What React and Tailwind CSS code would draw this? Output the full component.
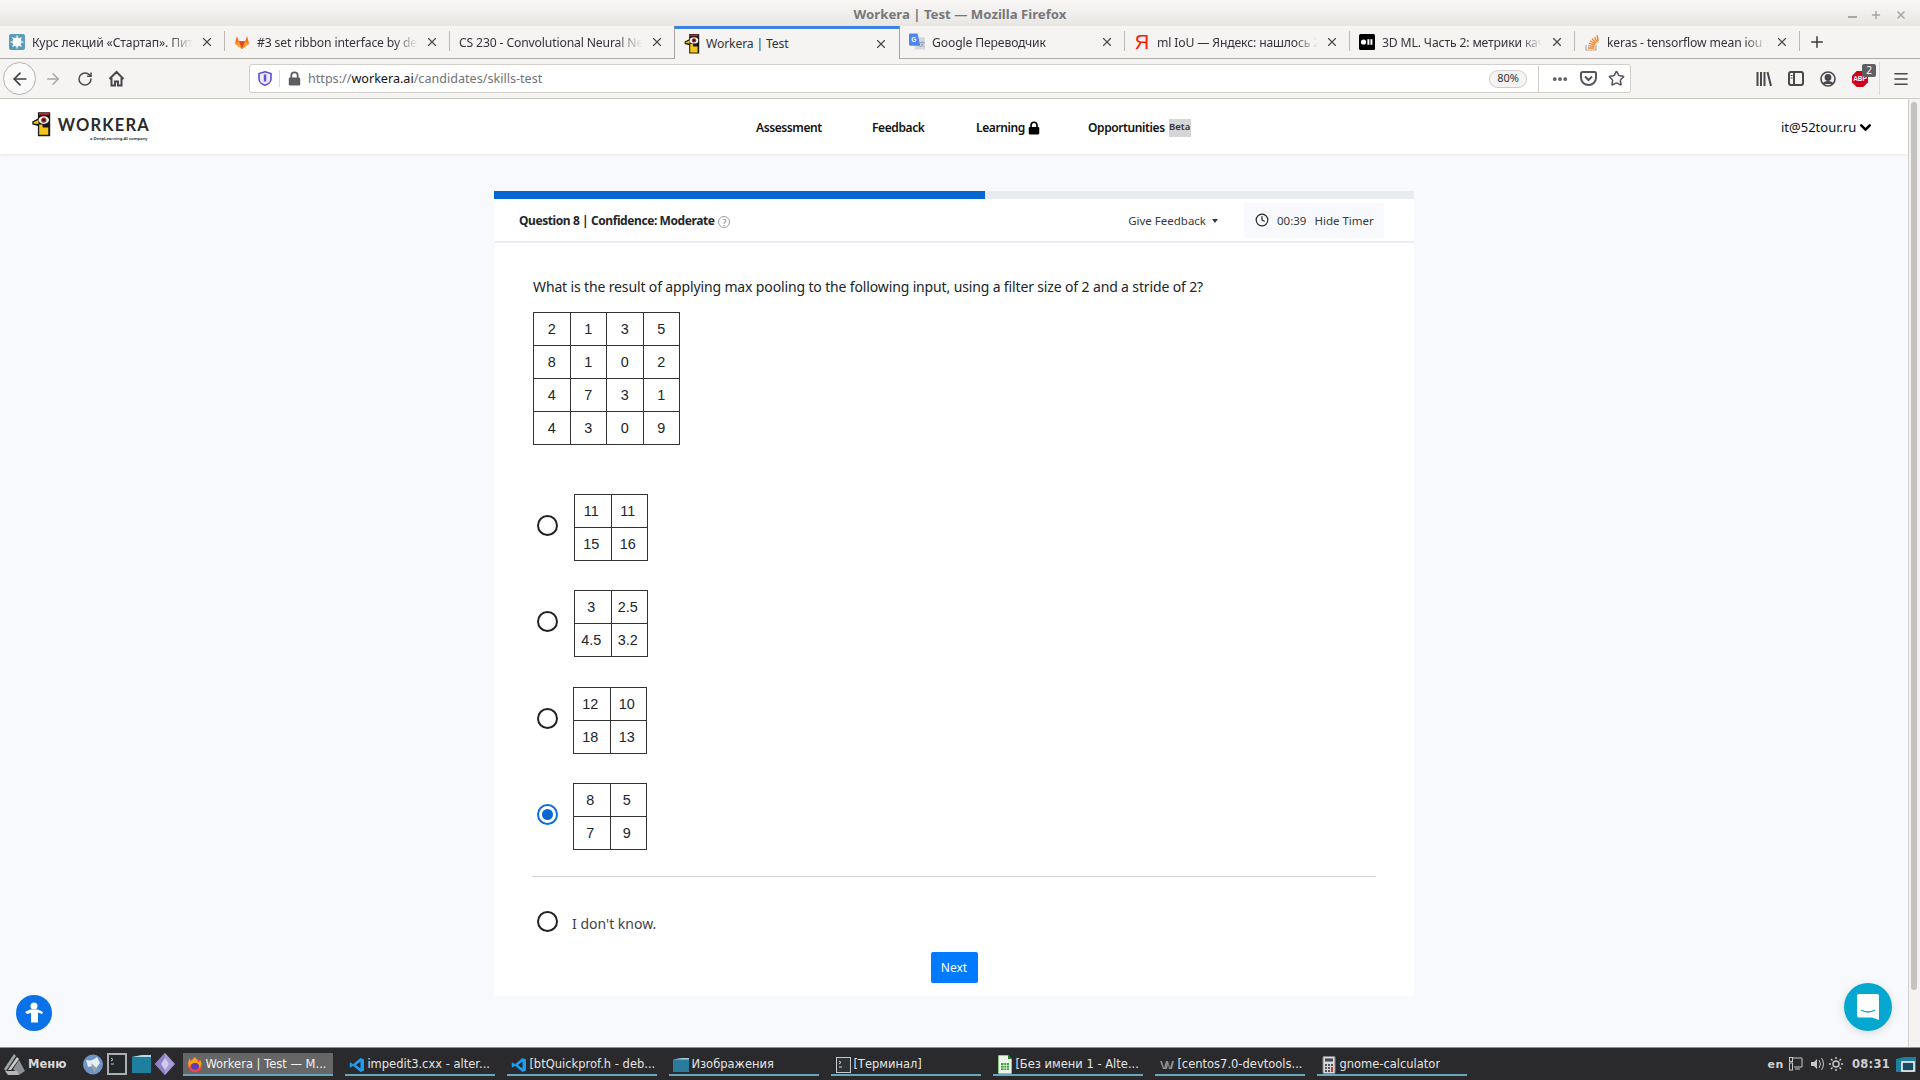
import React from 'react';
import { ArrowLeft, ArrowRight, RotateCw, Star, X, Plus, Menu, ChevronDown, Clock, Ellipsis } from 'lucide-react';

function Padlock({ className, color }) {
  return (
    <svg className={className} viewBox="0 0 13 15">
      <path d="M3.300 7V4.500a3.200 3.200 0 0 1 6.400 0V7" fill="none" stroke={color} strokeWidth="1.800" />
      <rect x="0.800" y="6.500" width="11.400" height="8" rx="1.200" fill={color} />
    </svg>
  );
}

function Bird({ className }) {
  return (
    <svg className={className} viewBox="0 0 19 25">
      <path d="M6 0h12.500v24.500H6V14L0.300 12.500V9.500L6 6.500z" fill="#1a1a1a" />
      <rect x="7" y="0.700" width="10.500" height="2" fill="#c8202c" />
      <path d="M7.300 12.500h3.200l.5 3h5.500v7.500H7.300z" fill="#f5c518" />
      <path d="M1.600 10.200 6.500 8v4l-4.900-.6z" fill="#f5c518" />
      <ellipse cx="12" cy="8" rx="5.300" ry="4" fill="#f4f3ea" />
      <circle cx="12" cy="8" r="2.700" fill="#a92a32" />
      <circle cx="12" cy="8" r="1.300" fill="#111" />
    </svg>
  );
}

function Favicon({ kind }) {
  if (kind === 'bird') return <Bird className="w-[16px] h-[20px]" />;
  if (kind === 'kurs') return (
    <svg width="16" height="16" viewBox="0 0 16 16"><rect width="16" height="16" rx="2" fill="#5b9bbd" /><circle cx="8" cy="8" r="4.500" fill="#fff" /><path d="M8 1.500v13M1.500 8h13M3.500 3.500l9 9M12.500 3.500l-9 9" stroke="#fff" strokeWidth="1.200" /></svg>
  );
  if (kind === 'gitlab') return (
    <svg width="17" height="16" viewBox="0 0 17 16"><path d="M8.500 15.500 1 9.800 3 1.500l2.200 5.600h6.600L14 1.500l2 8.300z" fill="#fc6d26" /><path d="M8.500 15.500 5.200 7.100h6.600z" fill="#e24329" /><path d="M8.500 15.500 1 9.800l4.200-2.700z" fill="#fca326" /><path d="M8.500 15.500 16 9.800l-4.200-2.700z" fill="#fca326" /></svg>
  );
  if (kind === 'translate') return (
    <svg width="17" height="18" viewBox="0 0 17 18"><rect x="6" y="4" width="11" height="13" fill="#d5d7da" /><path d="M1.500 0H9l3 13H1.500A1.500 1.500 0 0 1 0 11.500v-10A1.500 1.500 0 0 1 1.500 0z" fill="#4a86ee" /><text x="2.500" y="9" fontSize="7" fontWeight="700" fill="#fff" fontFamily="'Liberation Sans',sans-serif">G</text><text x="11" y="13" fontSize="6" fill="#7d8aa0" fontFamily="'Noto Sans CJK SC',sans-serif">文</text></svg>
  );
  if (kind === 'yandex') return <span className="w-[16px] text-center text-[20px] leading-none text-[#f5200a] font-['Liberation_Sans',sans-serif]">Я</span>;
  if (kind === 'hub') return (
    <svg width="16" height="16" viewBox="0 0 16 16"><rect width="16" height="16" rx="1.500" fill="#000" /><circle cx="4.500" cy="8" r="2.600" fill="#fff" /><rect x="8.400" y="5.200" width="2" height="5.600" fill="#fff" /><rect x="11.400" y="5.200" width="2" height="5.600" fill="#fff" /></svg>
  );
  if (kind === 'so') return (
    <svg width="16" height="17" viewBox="0 0 16 17" fill="none"><path d="M2 11v5h10v-5" stroke="#b0aca6" strokeWidth="1.200" /><path d="M4 14h6.500M4.200 11.600l6.300.7M4.800 9.100l6 1.700M6 6.800l5.400 3M8 4.800l4.300 4.300M10.500 3l2.800 5.200M13 1.200l1.200 5.800" stroke="#f48024" strokeWidth="1.300" /></svg>
  );
  return null;
}

const tabs = [
  { fav: 'kurs', t: 'Курс лекций «Стартап». Пит' },
  { fav: 'gitlab', t: '#3 set ribbon interface by def' },
  { fav: null, t: 'CS 230 - Convolutional Neural Ne' },
  { fav: 'bird', t: 'Workera | Test', active: true },
  { fav: 'translate', t: 'Google Переводчик' },
  { fav: 'yandex', t: 'ml IoU — Яндекс: нашлось 2' },
  { fav: 'hub', t: '3D ML. Часть 2: метрики кач' },
  { fav: 'so', t: 'keras - tensorflow mean iou f' },
];

function Tab({ fav, t, active, hideSep }) {
  return (
    <div className={active
      ? "relative w-[226px] h-[33px] -ml-px flex items-center pl-[9px] pr-[11px] bg-[#f5f4f2] border-x border-[#a9a6a2] border-t-[3px] border-t-[#3d83dc] z-10"
      : "relative w-[225px] h-[33px] flex items-center pl-[9px] pr-[11px] border-b border-[#aeaba7]"}>
      {fav && <span className={active ? "w-[16px] mr-[6px] flex items-center justify-center shrink-0" : "w-[16px] mr-[7px] flex items-center justify-center shrink-0"}><Favicon kind={fav} /></span>}
      <span className={active
        ? "flex-1 min-w-0 overflow-hidden whitespace-nowrap text-[12.2px] tracking-[-0.15px] text-[#33333a]"
        : "pt-[2px] flex-1 min-w-0 overflow-hidden whitespace-nowrap text-[12.2px] tracking-[-0.15px] text-[#33333a] [mask-image:linear-gradient(to_right,black_84%,transparent_98%)]"}>{t}</span>
      <X className="w-[14px] h-[14px] text-[#4a4a4f] shrink-0 ml-[4px]" strokeWidth={2} />
      {!active && !hideSep && <span className="absolute right-0 top-[5px] h-[20px] w-px bg-[#bdbab6]" />}
    </div>
  );
}

function Grid({ rows, tight }) {
  return (
    <table className="border-collapse font-['Liberation_Sans',sans-serif] text-[#212529] text-[14.4px]">
      <tbody>
        {rows.map((r, i) => (
          <tr key={i}>
            {r.map((c, j) => (
              <td key={j} className={tight
                ? "border border-[#333] text-center p-0 pt-[1px] pr-[3px] w-[36.5px] h-[33px]"
                : "border border-[#333] text-center p-0 pt-[1px] w-[36.5px] h-[33px]"}>{c}</td>
            ))}
          </tr>
        ))}
      </tbody>
    </table>
  );
}

function Radio({ on }) {
  return on ? (
    <span className="block w-[21px] h-[21px] rounded-full border-2 border-[#0a6fe0] flex items-center justify-center shrink-0">
      <span className="block w-[11px] h-[11px] rounded-full bg-[#0a66d1]" />
    </span>
  ) : (
    <span className="block w-[21px] h-[21px] rounded-full border-2 border-[#222] shrink-0" />
  );
}

function Option({ on, rows, className, gap }) {
  return (
    <div className={`flex items-center pl-[5px] ${className}`}>
      <div className="-mt-[5px]"><Radio on={on} /></div>
      <div className={gap}><Grid rows={rows} tight /></div>
    </div>
  );
}

function Task({ icon, t, active }) {
  return (
    <div className={active
      ? "w-[150px] h-[23px] mr-[12px] flex items-center pl-[4px] pt-[3px] bg-[#666666] border-b-2 border-[#6aa5bb] text-[#f0f0f0]"
      : "w-[150px] h-[23px] mr-[12px] flex items-center pl-[4px] pt-[3px] border-b-2 border-[#6aa5bb] text-[#e4e4e4]"}>
      <span className="w-[16px] h-[16px] mr-[2px] flex items-center justify-center shrink-0">{icon}</span>
      <span className="whitespace-nowrap overflow-hidden text-[11.5px] font-['DejaVu_Sans',sans-serif]">{t}</span>
    </div>
  );
}

const VS = <svg width="16" height="16" viewBox="0 0 16 16"><path d="M11.500 1 15 2.500v11L11.500 15 4 8.800 1.800 10.500.8 10V6l1-.5L4 7.200z" fill="#1f9cf0" /><path d="M11.500 4.500 7 8l4.500 3.500z" fill="#2a2a2c" /></svg>;
const Term = <svg width="15" height="16" viewBox="0 0 15 16"><rect x=".5" y=".5" width="14" height="15" fill="#2e3436" stroke="#c8c8c8" /><path d="M3 4l2 1.500L3 7M3 10h3" stroke="#ddd" fill="none" /></svg>;
const Folder = <svg width="16" height="15" viewBox="0 0 16 15"><path d="M0 2.500 9 1h7v14H0z" fill="#2a7d9a" /><path d="M0 2.500 9 1h7v1.500H0z" fill="#9fd0e0" /></svg>;
const Fox = <svg width="16" height="17" viewBox="0 0 16 17"><circle cx="8" cy="9.500" r="7" fill="#e8474c" /><circle cx="8" cy="9.500" r="4" fill="#5b3fb0" /><path d="M3 2c-2 3-2.500 7 0 10 0-3 2-5 5-5 3 0 5 2 4 5 3-2 3-6 1-8 0 1-1 2-2 2 0-2-2-4-4-5 0 2-2 3-4 4z" fill="#f7a21b" /></svg>;
const Calc = <svg width="16" height="18" viewBox="0 0 16 18"><rect x="2" y=".5" width="12" height="17" rx="1" fill="#d8d8d8" stroke="#888" /><rect x="4" y="2.500" width="8" height="3" fill="#445" /><path d="M4 8h2v2H4zM7 8h2v2H7zM10 8h2v2h-2zM4 11h2v2H4zM7 11h2v2H7zM4 14h2v2H4zM7 14h2v2H7z" fill="#555" /><path d="M10 11h2v5h-2z" fill="#c33" /></svg>;
const Sheet = <svg width="14" height="19" viewBox="0 0 14 19"><path d="M0 0h10l4 4v15H0z" fill="#eef5e8" stroke="#2a9a2a" /><path d="M10 0l4 4h-4z" fill="#1b7d1b" /><path d="M3 8h8v7H3z" fill="#3ba63b" /><path d="M3 10.500h8M3 13h8M6 8v7M8.500 8v7" stroke="#fff" strokeWidth=".6" /></svg>;
const Vmw = <svg width="14" height="10" viewBox="0 0 14 10"><path d="M0 1h2l2 7 2-7h2l2 7 2-7h2l-2 8h-3L8 4 7 9H3z" fill="#8c8c8c" /></svg>;

export default function App() {
  return (
    <div className="w-[1920px] h-[1080px] overflow-hidden flex flex-col relative font-['Noto_Sans',sans-serif] bg-[#f8f9fd]">
      {/* Title bar */}
      <div className="h-[26px] shrink-0 relative flex items-center justify-center pt-[3px] bg-gradient-to-b from-[#f9f8f7] to-[#e7e6e3]">
        <span className="text-[13.2px] font-bold text-[#77777a]">Workera | Test — Mozilla Firefox</span>
        <div className="absolute right-[13px] top-[9px] flex items-center gap-[13px] text-[#a5a5a5]">
          <span className="w-[9px] h-[2px] bg-[#a9a9a9] mt-[3px]" />
          <Plus className="w-[12px] h-[12px]" strokeWidth={3} />
          <X className="w-[12px] h-[12px]" strokeWidth={3} />
        </div>
      </div>

      {/* Tabs */}
      <div className="h-[33px] shrink-0 flex bg-[#f5f4f2]">
        {tabs.map((t, i) => (
          <Tab key={i} {...t} hideSep={i === 2} />
        ))}
        <div className="flex-1 h-[33px] border-b border-[#aeaba7] pl-[8px] flex items-center">
          <Plus className="w-[18px] h-[18px] text-[#3a3a3f]" strokeWidth={2} />
        </div>
      </div>

      {/* Toolbar */}
      <div className="h-[40px] shrink-0 flex items-center bg-[#f5f4f2] border-b border-[#cfccc8]">
        <span className="ml-[3px] w-[33px] h-[33px] rounded-full border border-[#b4b2ae] bg-[#fbfafa] flex items-center justify-center">
          <ArrowLeft className="w-[20px] h-[20px] text-[#3f3f44]" strokeWidth={2} />
        </span>
        <ArrowRight className="ml-[8px] w-[18px] h-[18px] text-[#a8a8aa]" strokeWidth={2} />
        <RotateCw className="ml-[15px] w-[16px] h-[16px] text-[#47474c]" strokeWidth={2.2} />
        <svg className="ml-[15px]" width="17" height="17" viewBox="0 0 17 17" fill="none" stroke="#47474c" strokeWidth="2"><path d="M1.500 9 8.500 2l7 7M3.500 8v7.500h3.500v-4h3v4h3.500V8" /></svg>

        <div className="ml-[124px] w-[1382px] h-[29px] bg-white rounded-[3px] border border-[#d2cfcb] flex items-center">
          <svg className="ml-[8px]" width="14" height="15" viewBox="0 0 14 15"><path d="M7 .8 13 2.500v5.500c0 3-3 5.500-6 6.200-3-.7-6-3.200-6-6.200V2.500z" fill="#eceafd" stroke="#5a4fd8" strokeWidth="1.600" /><path d="M7 3.500v7" stroke="#5a4fd8" strokeWidth="2.400" /></svg>
          <span className="ml-[7px] w-px h-[17px] bg-[#dcdad7]" />
          <Padlock className="ml-[8px] w-[13px] h-[15px]" color="#5c5c61" />
          <span className="ml-[7px] pt-[2px] text-[12.6px] text-[#737378]">https://<span className="text-[#111]">workera.ai</span>/candidates/skills-test</span>
          <div className="flex-1" />
          <span className="w-[38px] h-[18px] rounded-full border border-[#d0cecb] bg-[#f5f4f2] text-[11px] text-[#333] flex items-center justify-center">80%</span>
          <span className="ml-[11px] w-px h-[26px] bg-[#d0cdc9]" />
          <Ellipsis className="ml-[12px] w-[18px] h-[18px] text-[#55555a]" strokeWidth={3} />
          <svg className="ml-[11px]" width="17" height="15" viewBox="0 0 17 15" fill="none" stroke="#55555a" strokeWidth="2"><path d="M1 2.500C1 1.600 1.600 1 2.500 1h12c.9 0 1.500.6 1.500 1.500V7c0 3.800-3.500 7-7.500 7S1 10.800 1 7z" /><path d="m5 5.500 3.500 3.500L12 5.500" /></svg>
          <Star className="ml-[11px] w-[17px] h-[17px] text-[#55555a]" strokeWidth={2.2} />
          <span className="w-[5px]" />
        </div>

        <svg className="ml-[125px]" width="16" height="16" viewBox="0 0 16 16" stroke="#47474c" strokeWidth="2" fill="none"><path d="M1.500 1v14M5 1v14M8.500 1v14M11.500 1l3.500 14" /></svg>
        <svg className="ml-[16px]" width="16" height="15" viewBox="0 0 16 15" fill="none" stroke="#47474c" strokeWidth="2"><rect x="1" y="1" width="14" height="13" rx="2" /><path d="M6 1v13" /><path d="M2.500 4.500h2M2.500 7h2" strokeWidth="1" /></svg>
        <svg className="ml-[16px]" width="16" height="16" viewBox="0 0 16 16" fill="none" stroke="#47474c" strokeWidth="1.600"><circle cx="8" cy="8" r="7" /><circle cx="8" cy="6.500" r="2.600" fill="#47474c" /><path d="M3.500 13c1-3 8-3 9 0" fill="#47474c" /></svg>
        <span className="relative ml-[16px] w-[16px] h-[16px]">
          <svg width="16" height="16" viewBox="0 0 16 16"><path d="M4.700 0h6.600L16 4.700v6.600L11.300 16H4.700L0 11.300V4.700z" fill="#d0021b" /></svg>
          <span className="absolute inset-0 flex items-center justify-center text-white font-bold text-[6.500px] font-['Liberation_Sans',sans-serif]">ABP</span>
          <span className="absolute left-[10px] -top-[7px] w-[14px] h-[13px] rounded-[2px] bg-[#5f5f63] text-white text-[10px] leading-[13px] text-center">2</span>
        </span>
        <span className="ml-[11px] w-px h-[33px] bg-[#dcdad7]" />
        <Menu className="ml-[12px] w-[18px] h-[18px] text-[#47474c]" strokeWidth={2.2} />
      </div>

      {/* Page + scrollbar */}
      <div className="flex-1 min-h-0 flex">
        <div className="flex-1 min-w-0 flex flex-col">
          {/* Site nav */}
          <div className="h-[55px] shrink-0 bg-white shadow-[0_1px_3px_rgba(0,0,0,0.08)] flex items-center relative z-10">
            <div className="ml-[32px] w-[118px] flex items-start">
              <Bird className="w-[19px] h-[25px] -mt-[4px]" />
              <span className="ml-[7px] text-[16.5px] leading-[18px] font-bold tracking-[1.2px] text-[#2b2b2b] font-['Lato',sans-serif] whitespace-nowrap">WORKERA</span>
            </div>
            <div className="ml-[606px] mt-[2px] flex items-center text-[12px] font-semibold tracking-[-0.4px] text-[#111]">
              <span className="w-[116px]">Assessment</span>
              <span className="w-[104px]">Feedback</span>
              <span className="w-[112px] flex items-center">Learning<Padlock className="ml-[3px] w-[12px] h-[14px]" color="#000" /></span>
              <span className="flex items-center">Opportunities<span className="ml-[4px] w-[22px] h-[18px] bg-[#d6d6d6] text-[9.500px] tracking-normal font-semibold text-[#333] flex items-center justify-center">Beta</span></span>
            </div>
            <div className="absolute left-[1781px] top-[19px] flex items-center text-[13px] text-[#111]">
              it@52tour.ru<ChevronDown className="ml-[1px] w-[17px] h-[17px] text-black" strokeWidth={3.6} />
            </div>
            <span className="absolute left-[90px] top-[36px] text-[4.200px] leading-[7px] text-[#222] whitespace-nowrap font-semibold">a DeepLearning.AI company</span>
          </div>

          {/* Card */}
          <div className="flex-1 min-h-0 pt-[37px]">
            <div className="w-[920px] h-[805px] mx-auto bg-white">
              <div className="h-[8px] bg-[#e9ecef]"><div className="w-[491px] h-full bg-[#0566d1]" /></div>
              <div className="h-[44px] border-b-2 border-[#e9edf5] flex items-center pl-[25px] pr-[30px]">
                <span className="mt-[2px] text-[12px] font-bold tracking-[-0.42px] text-[#22262a]">Question 8 | Confidence: Moderate</span>
                <span className="ml-[4px] mt-[3px] w-[12px] h-[12px] rounded-full border border-[#9a9a9a] text-[9px] leading-[11px] text-center text-[#777]">?</span>
                <div className="flex-1" />
                <span className="mt-[2px] text-[11.5px] text-[#343a40]">Give Feedback</span>
                <span className="ml-[6px] mt-[2px] w-0 h-0 border-x-[3px] border-x-transparent border-t-[4px] border-t-[#343a40]" />
                <div className="ml-[26px] w-[140px] h-[35px] bg-[#f8f9fd] rounded-[2px] flex items-center pl-[11px] text-[11.5px] text-[#343a40]">
                  <Clock className="w-[14px] h-[14px] text-[#222]" strokeWidth={2} />
                  <span className="ml-[8px] mt-[2px]">00:39</span>
                  <span className="ml-[8px] mt-[2px]">Hide Timer</span>
                </div>
              </div>
              <div className="pl-[38px] pr-[38px]">
                <p className="ml-px mt-[33px] text-[14px] tracking-[-0.14px] leading-[22px] text-[#212529]">What is the result of applying max pooling to the following input, using a filter size of 2 and a stride of 2?</p>
                <div className="ml-px mt-[14px]">
                  <Grid rows={[[2, 1, 3, 5], [8, 1, 0, 2], [4, 7, 3, 1], [4, 3, 0, 9]]} />
                </div>
                <Option className="mt-[49px]" gap="ml-[16px]" rows={[[11, 11], [15, 16]]} />
                <Option className="mt-[29px]" gap="ml-[16px]" rows={[[3, 2.5], [4.5, 3.2]]} />
                <Option className="mt-[30px]" gap="ml-[15px]" rows={[[12, 10], [18, 13]]} />
                <Option className="mt-[29px]" gap="ml-[15px]" on rows={[[8, 5], [7, 9]]} />
                <div className="mt-[26px] h-px bg-[#d5d5d5]" />
                <div className="mt-[34px] flex items-center pl-[5px]">
                  <Radio />
                  <span className="ml-[14px] translate-y-[2px] text-[14px] text-[#3f4347]">I don't know.</span>
                </div>
                <div className="mt-[20px] flex justify-center">
                  <button className="w-[47px] h-[31px] rounded-[2px] bg-[#007bff] text-white text-[12px]">Next</button>
                </div>
              </div>
            </div>
          </div>
        </div>
        {/* Scrollbar */}
        <div className="w-[12px] shrink-0 bg-[#f4f3f1] border-l border-[#d3d1ce] pt-[3px] pl-[2px]">
          <div className="w-[6px] h-[888px] rounded-full bg-[#c4c3c1]" />
        </div>
      </div>

      {/* Taskbar */}
      <div className="h-[33px] shrink-0 bg-[#2a2a2c] border-t border-[#8f8f8f] flex items-center font-['DejaVu_Sans',sans-serif]">
        <svg className="ml-[3px] shrink-0" width="22" height="21" viewBox="0 0 22 21"><path d="M11 0 1 15l2 2L13 2z" fill="#9ea3a6" /><path d="M14 3 5 16h3l8-11z" fill="#c9cccd" /><path d="M16 6 10 15l6 6 6-4z" fill="#8a9094" /><path d="M2 17h12l2 4H5z" fill="#b5b8ba" /></svg>
        <span className="ml-[3px] pt-[2px] text-[11.5px] font-bold text-[#d8d8d8]">Меню</span>
        <svg className="ml-[17px] shrink-0" width="20" height="21" viewBox="0 0 20 21"><circle cx="10" cy="10.500" r="10" fill="#6f93c4" /><path d="M3 6c4 1 8 0 11-3l3 6-6 8-1-5-5 1z" fill="#e6edf5" /><path d="M8 9l3 10 1.500-3 3-.5z" fill="#9aa3ad" /></svg>
        <svg className="ml-[4px] shrink-0" width="20" height="22" viewBox="0 0 20 22"><rect x="1" y="1" width="18" height="20" fill="#23292b" stroke="#a8b0b0" strokeWidth="2" /><path d="M4 5l2 1.500L4 8M4 11h3" stroke="#ccc" fill="none" /></svg>
        <svg className="ml-[5px] shrink-0" width="19" height="20" viewBox="0 0 19 20"><path d="M0 3 10 1h9v18H0z" fill="#1f7f9f" /><path d="M0 3 10 1h9v2H0z" fill="#b3dbe8" /></svg>
        <svg className="ml-[4px] shrink-0" width="20" height="26" viewBox="0 0 20 26"><path d="M10 2 20 13 10 24 0 13z" fill="#a89bd8" /><path d="M10 2v22L0 13z" fill="#8f82c4" /><path d="M10 7l4 6-4 6-4-6z" fill="#d3cbef" /></svg>
        <div className="w-[8px] shrink-0" />
        <div className="flex">
          <Task active icon={Fox} t="Workera | Test — M..." />
          <Task icon={VS} t="impedit3.cxx - alter..." />
          <Task icon={VS} t="[btQuickprof.h - deb..." />
          <Task icon={Folder} t="Изображения" />
          <Task icon={Term} t="[Терминал]" />
          <Task icon={Sheet} t="[Без имени 1 - Alte..." />
          <Task icon={Vmw} t="[centos7.0-devtools..." />
          <Task icon={Calc} t="gnome-calculator" />
        </div>
        <div className="flex-1" />
        <span className="pt-[2px] text-[11px] font-bold tracking-[0.5px] text-[#cfcfcf]">en</span>
        <svg className="ml-[5px] shrink-0" width="14" height="14" viewBox="0 0 14 14" fill="none" stroke="#c8c8c8"><path d="M3 1h10v9H5" /><rect x=".5" y=".5" width="3" height="4" /><rect x=".5" y="6" width="3" height="7" /><path d="M6 12h5" /></svg>
        <svg className="ml-[8px] shrink-0" width="14" height="14" viewBox="0 0 14 14" fill="#c8c8c8"><path d="M0 5h3l3-3v10L3 9H0z" /><path d="M8 3q3 4 0 8M10.500 1q4 6 0 12" stroke="#c8c8c8" fill="none" /></svg>
        <svg className="ml-[4px] shrink-0" width="14" height="14" viewBox="0 0 14 14" fill="none" stroke="#c8c8c8" strokeWidth="1.500"><circle cx="7" cy="7" r="3" /><path d="M7 0v2M7 12v2M0 7h2M12 7h2M2 2l1.500 1.500M10.500 10.500 12 12M12 2l-1.500 1.500M3.500 10.500 2 12" /></svg>
        <span className="ml-[9px] pt-[2px] text-[11.5px] font-bold tracking-[0.3px] text-[#cfcfcf]">08:31</span>
        <svg className="ml-[6px] mr-[4px] shrink-0" width="20" height="15" viewBox="0 0 20 15"><path d="M0 2 8 0h12v15H0z" fill="#1f7f9f" /><rect x="6" y="5" width="12" height="9" fill="#1b4b5f" stroke="#fff" strokeWidth="1.500" /></svg>
      </div>

      {/* Floating buttons */}
      <div className="absolute left-[16px] top-[995px] w-[36px] h-[36px] rounded-full bg-[#0a71e8] flex items-center justify-center">
        <svg width="20" height="22" viewBox="0 0 20 22" fill="#fff"><circle cx="10" cy="4" r="3.500" /><path d="M1 10l5-2.500h8l5 2.500-1 2-4-1.500v3l0 7H7V11L3 12z" /></svg>
      </div>
      <div className="absolute left-[1844px] top-[983px] w-[48px] h-[48px] rounded-full bg-[#03a7d0] shadow-[0_2px_10px_rgba(0,0,0,0.12)] flex items-center justify-center">
        <svg width="22" height="26" viewBox="0 0 22 26"><path d="M2 0h18a2 2 0 0 1 2 2v24l-7-2.500H2a2 2 0 0 1-2-2V2a2 2 0 0 1 2-2z" fill="#fff" /><path d="M4 16q7 4 14 0" stroke="#03a7d0" strokeWidth="1.300" fill="none" /></svg>
      </div>
    </div>
  );
}
